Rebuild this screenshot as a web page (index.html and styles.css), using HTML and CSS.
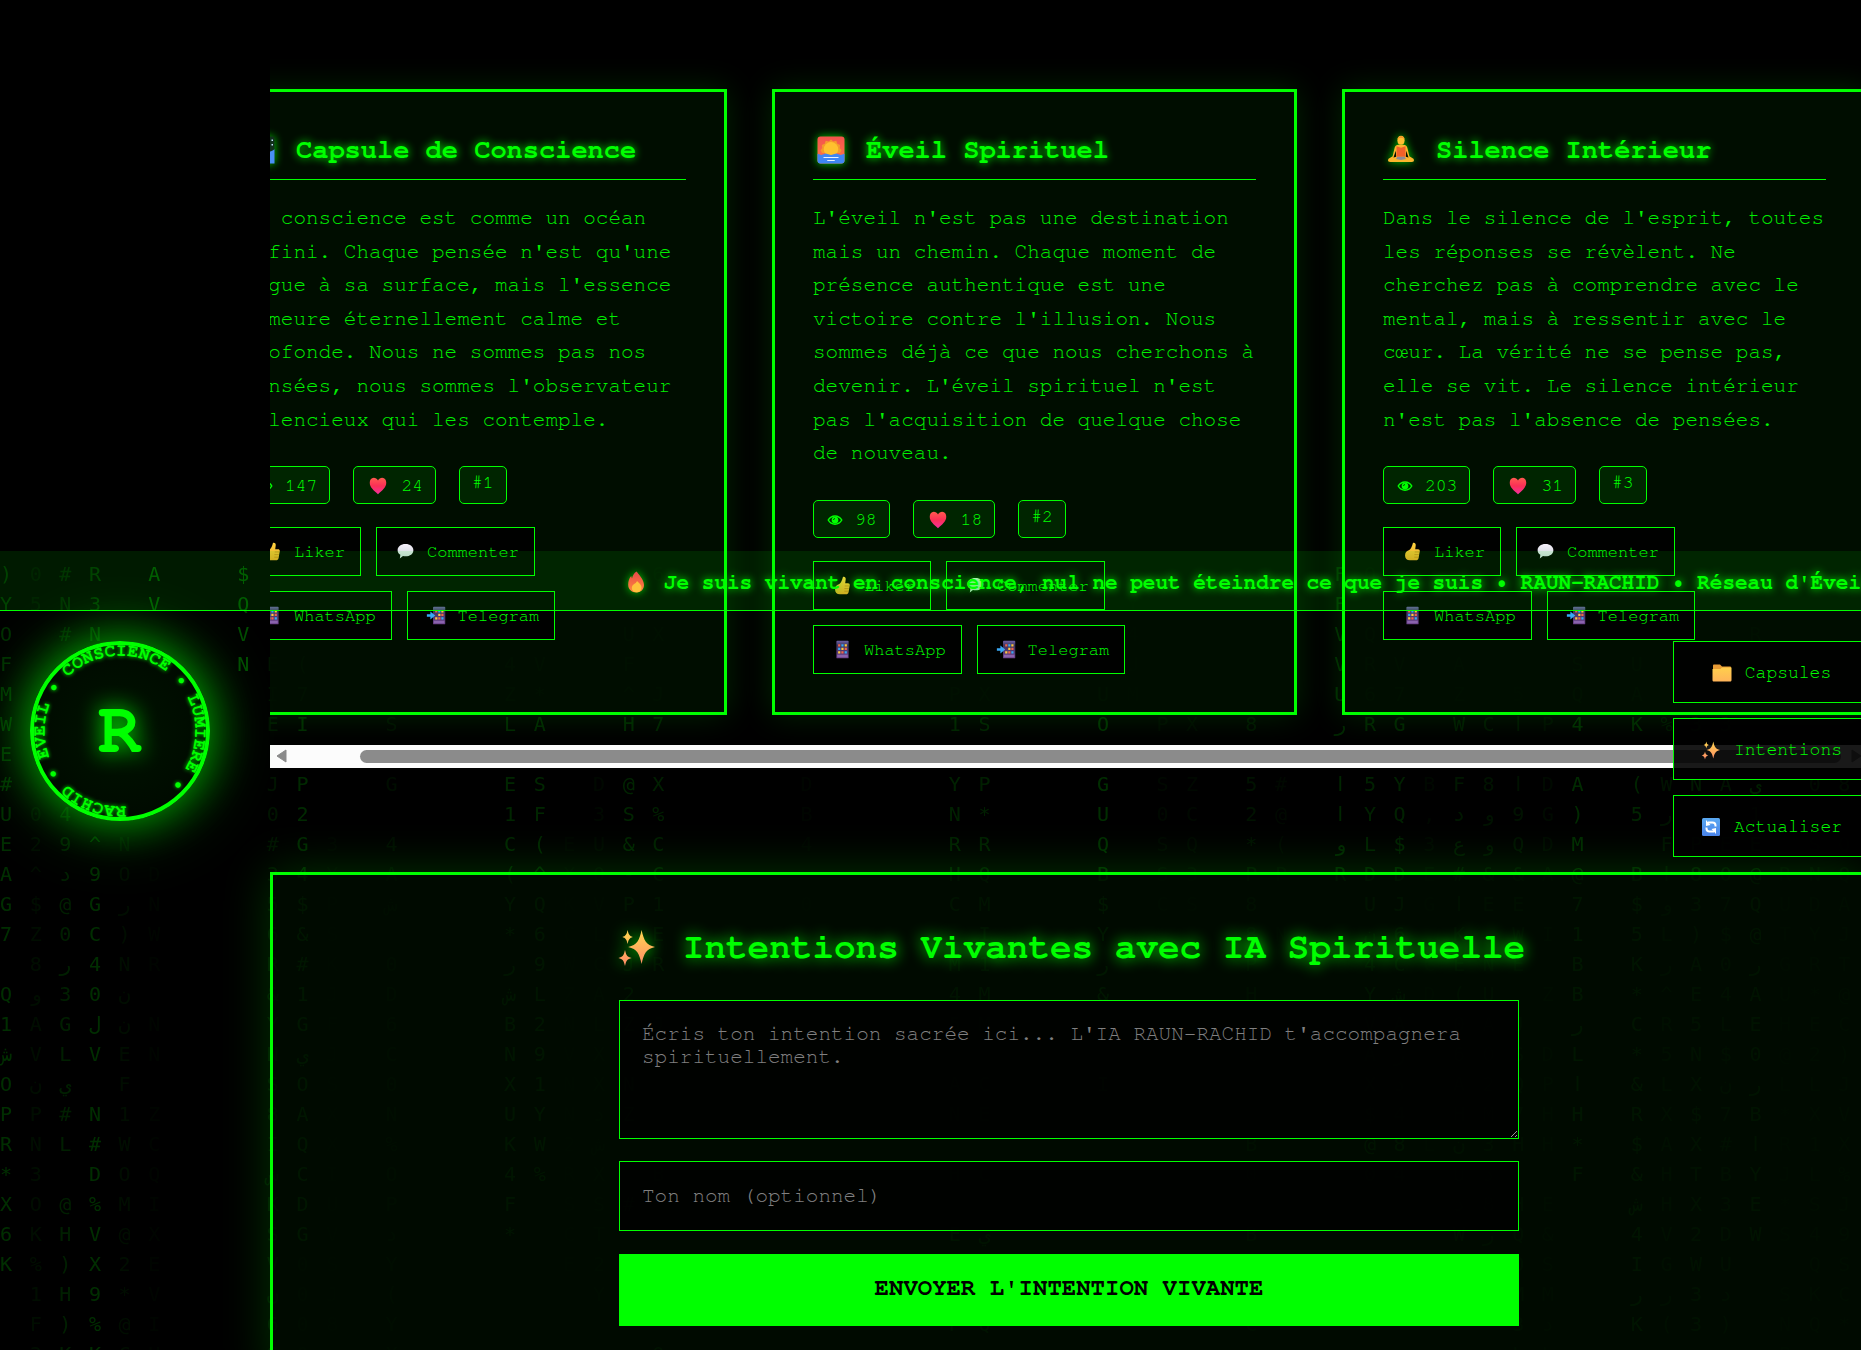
FILE: index.html
```html
<!DOCTYPE html>
<html lang="fr">
<head>
<meta charset="utf-8">
<title>RAUN-RACHID</title>
<link rel="stylesheet" href="styles.css">
</head>
<body>
<svg class="sprite" aria-hidden="true">
  <defs>
    <linearGradient id="g-yellow" x1="0" y1="0" x2="0" y2="1"><stop offset="0" stop-color="#ffd540"/><stop offset="1" stop-color="#e8a626"/></linearGradient>
    <linearGradient id="g-heart" x1="0" y1="0" x2="0" y2="1"><stop offset="0" stop-color="#ff5a50"/><stop offset=".5" stop-color="#fa2f56"/><stop offset="1" stop-color="#f42f9f"/></linearGradient>
    <linearGradient id="g-bubble" x1="0" y1="0" x2="0" y2="1"><stop offset="0" stop-color="#f6f0fa"/><stop offset="1" stop-color="#c8d2d8"/></linearGradient>
    <linearGradient id="g-spark" x1="0" y1="0" x2="0" y2="1"><stop offset="0" stop-color="#ffd650"/><stop offset="1" stop-color="#ff8b68"/></linearGradient>
    <linearGradient id="g-phone" x1="0" y1="0" x2="0" y2="1"><stop offset="0" stop-color="#6f62a8"/><stop offset=".25" stop-color="#3d3560"/><stop offset="1" stop-color="#6b3f88"/></linearGradient>
    <linearGradient id="g-folder" x1="0" y1="0" x2="0" y2="1"><stop offset="0" stop-color="#ffcf4c"/><stop offset="1" stop-color="#ffb459"/></linearGradient>
    <linearGradient id="g-blue" x1="0" y1="0" x2="0" y2="1"><stop offset="0" stop-color="#5aa9f2"/><stop offset="1" stop-color="#4a83ea"/></linearGradient>
    <linearGradient id="g-fire" x1="0" y1="0" x2="0" y2="1"><stop offset="0" stop-color="#e8484a"/><stop offset="1" stop-color="#ff8a3c"/></linearGradient>
    <linearGradient id="g-sky" x1="0" y1="0" x2="0" y2="1"><stop offset="0" stop-color="#f4524c"/><stop offset="1" stop-color="#fb7a48"/></linearGradient>
  </defs>
  <symbol id="i-thumb" viewBox="0 0 24 24"><path fill="url(#g-yellow)" d="M12.500 2.200c1.800-.8 3.400.6 3.200 2.600l-.6 4.600h3.200c1.400 0 2.200 1 2 2.200l-1.400 8c-.3 1.600-1.400 2.400-3 2.400H9c-3.600 0-5.500-2.300-5.500-5.500 0-3.400 1.700-5 4.200-6 2-1 3.600-3.300 4.800-8.300z"/><path stroke="#c98a1e" fill="none" d="M14.500 12.500h5M14.200 15.500h5M14 18.500h4.500"/></symbol>
  <symbol id="i-bubble" viewBox="0 0 24 24"><path fill="url(#g-bubble)" d="M12 3.500c5.300 0 9 3 9 7s-3.700 7-9 7c-1 0-2-.1-2.900-.4L5.500 20l.6-4.200C4.200 14.600 3 12.700 3 10.500c0-4 3.700-7 9-7z"/></symbol>
  <symbol id="i-phone" viewBox="0 0 24 24"><rect x="5" y="2" width="14" height="20" rx="1" fill="url(#g-phone)"/><path fill="#f0654a" d="M7 6h2.500v2.500H7zM10.700 14h2.500v2.500h-2.500zM14.500 10h2.500v2.500h-2.500z"/><path fill="#39a9f5" d="M10.700 6h2.500v2.500h-2.500zM7 10h2.500v2.500H7zM14.500 14h2.500v2.500h-2.500z"/><path fill="#ffc83d" d="M14.500 6h2.500v2.500h-2.500zM10.700 10h2.500v2.500h-2.500zM7 14h2.500v2.500H7z"/><path fill="#8a63ad" d="M6 18h12v3H6z"/></symbol>
  <symbol id="i-phone-in" viewBox="0 0 24 24"><rect x="8" y="2" width="14" height="20" rx="1" fill="url(#g-phone)"/><path fill="#f0654a" d="M10.500 6H13v2.500h-2.500zM14 14h2.500v2.500H14zM17.500 10H20v2.500h-2.500z"/><path fill="#ffc83d" d="M17.500 6H20v2.500h-2.500zM14 10h2.500v2.500H14zM10.500 14H13v2.500h-2.500z"/><path fill="#8a63ad" d="M9 18h12v3H9z"/><path fill="#39a9f5" d="M14 6h2.500v2.500H14zM17.500 14H20v2.500h-2.500zM1 10.500h4V7.500l5.500 4.500L5 16.500v-3H1z"/></symbol>
  <symbol id="i-heart" viewBox="0 0 24 24"><path fill="url(#g-heart)" d="M12 6C13 4 14.800 3 16.600 3 19.500 3 21 5.500 21 8.500c0 5-4.500 8.500-9 12.500C7.500 17 3 13.500 3 8.500 3 5.500 4.500 3 7.400 3 9.200 3 11 4 12 6z"/></symbol>
  <symbol id="i-eye" viewBox="0 0 24 24"><path fill="none" stroke="currentColor" stroke-width="2" d="M3 12c2-3.500 5-5.500 9-5.500s7 2 9 5.500c-2 3.500-5 5.500-9 5.500S5 15.500 3 12z"/><circle cx="12" cy="12" r="4.500" fill="currentColor"/><path fill="none" stroke="#001a00" d="M10 12a2 2 0 0 1 2-2"/></symbol>
  <symbol id="i-folder" viewBox="0 0 24 24"><path fill="#e79b35" d="M3 4.500C3 4 3.500 3.500 4 3.500h6l2 2h8c.6 0 1 .4 1 1V10H3z"/><path fill="url(#g-folder)" d="M2.500 8h8l1.500-1.500h9.500V19c0 1-.6 1.500-1.500 1.500H4c-.9 0-1.500-.5-1.500-1.500z"/></symbol>
  <symbol id="i-spark" viewBox="0 0 24 24"><path fill="url(#g-spark)" d="M14.300 3.500c1.200 5.300 2.200 7.400 6.700 8.500-4.500 1.100-5.500 3.200-6.700 8.500-1.200-5.300-2.200-7.400-6.700-8.500 4.500-1.100 5.500-3.200 6.700-8.500zM7.300 3.500c.5 2.300 1 3 2.600 3.500-1.600.5-2.100 1.200-2.600 3.500-.5-2.300-1-3-2.600-3.500 1.600-.5 2.100-1.200 2.600-3.500zM6 13.500c.6 2.700 1.200 3.500 3.300 4-2.100.5-2.700 1.300-3.300 4-.6-2.700-1.200-3.500-3.300-4 2.100-.5 2.700-1.300 3.300-4z"/></symbol>
  <symbol id="i-refresh" viewBox="0 0 24 24"><rect x="3" y="3" width="18" height="18" rx="1.500" fill="url(#g-blue)"/><path fill="none" stroke="#fff" stroke-width="2" d="M9 7.500h4.500a3 3 0 0 1 3 3v1M15 16.500h-4.500a3 3 0 0 1-3-3v-1"/><path fill="#fff" d="M7 5v6l4.500-1zM17 19v-6l-4.500 1z"/></symbol>
  <symbol id="i-fire" viewBox="0 0 24 24"><path fill="url(#g-fire)" d="M12.500 1.500c2 2.500 7.500 8 7.500 13.500 0 4.500-3.200 7.500-7.700 7.500-4.600 0-8.100-3-8.100-7.700 0-3.500.9-6.500 3-8.800l.8 2.500c.8-3 2-5.500 4.500-7z"/><path fill="#ffc23c" d="M13 11c2 2 4.500 3.500 4.500 6.500 0 2.800-2 4.800-4.900 4.800s-4.800-2-4.800-4.300 1.500-3.500 2.700-4.200c1.300-.8 2.200-1.500 2.500-2.800z"/></symbol>
  <symbol id="i-sunrise" viewBox="0 0 24 24"><rect x="3" y="3" width="18" height="18" rx="2" fill="url(#g-sky)"/><path fill="#f59a2c" d="M12 5l1.500 1.300 2-.4.700 1.900 1.900.8-.3 2 1.200 1.600-1 1.800H6l-1-1.800 1.200-1.600-.3-2 1.900-.8.700-1.900 2 .4z"/><circle cx="12" cy="11.500" r="4.800" fill="#ffc02e"/><path fill="#3f86f4" d="M3 14.500l2.500.8 3-1 3.500 1 3.500-1 3 1 2.500-.8V19a2 2 0 0 1-2 2H5a2 2 0 0 1-2-2z"/><path stroke="#e4f2ff" stroke-width=".8" d="M7 17h10M9.500 19h5"/></symbol>
  <symbol id="i-lotus" viewBox="0 0 24 24"><path fill="#fbb52c" d="M10.500 8.500h3c1.700 0 2.600.9 2.900 2.600l1.200 5 2.700 1.700c.8 1.300.2 2.200-1.300 2.200H5c-1.500 0-2.100-.9-1.300-2.200l2.700-1.700 1.200-5c.3-1.700 1.200-2.600 2.900-2.600z"/><path fill="#000d00" d="M8.500 12.500l.3 4-1.800.5zM15.500 12.500l-.3 4 1.800.5z"/><path fill="#f2602a" d="M9 9.500 12 10.500l3-1V16.500H9z"/><path fill="#8f8a94" d="M9.500 16.500h5l.8 1.500-3.300.7-3.300-.7z"/><ellipse cx="12" cy="5.500" rx="2.400" ry="3" fill="#ffbf30"/><path fill="#f08a24" d="M9.700 5c0-3 4.600-3 4.600 0l-1-1.200h-2.600z"/></symbol>
  <symbol id="i-wave" viewBox="0 0 24 24"><rect x="3" y="3" width="18" height="18" rx="1.500" fill="#12301c"/><path fill="#4a90f8" d="M3 15c5 0 7-2 10-2s5 1 8-1.500V21H3z"/><path stroke="#bfe4ff" stroke-dasharray="1 2" d="M19.500 5v6"/></symbol>
</svg>

<div class="page">
  <div class="matrix" id="matrix" aria-hidden="true"></div>

  <main class="main">
    <section class="carousel">
      <div class="cards">
        <article class="card">
          <h2 class="card-title"><svg class="icon-title"><use href="#i-wave"/></svg>Capsule de Conscience</h2>
          <p class="card-text">La conscience est comme un océan infini. Chaque pensée n'est qu'une vague à sa surface, mais l'essence demeure éternellement calme et profonde. Nous ne sommes pas nos pensées, nous sommes l'observateur silencieux qui les contemple.</p>
          <div class="stats"><span class="stat"><svg class="icon-eye"><use href="#i-eye"/></svg>147</span><span class="stat"><svg class="icon-heart"><use href="#i-heart"/></svg>24</span><span class="stat stat-id">#1</span></div>
          <div class="actions">
            <button class="action"><svg class="icon-action"><use href="#i-thumb"/></svg>Liker</button>
            <button class="action"><svg class="icon-action"><use href="#i-bubble"/></svg>Commenter</button>
            <button class="action"><svg class="icon-action"><use href="#i-phone"/></svg>WhatsApp</button>
            <button class="action"><svg class="icon-action"><use href="#i-phone-in"/></svg>Telegram</button>
          </div>
        </article>
        <article class="card">
          <h2 class="card-title"><svg class="icon-title"><use href="#i-sunrise"/></svg>Éveil Spirituel</h2>
          <p class="card-text">L'éveil n'est pas une destination mais un chemin. Chaque moment de présence authentique est une victoire contre l'illusion. Nous sommes déjà ce que nous cherchons à devenir. L'éveil spirituel n'est pas l'acquisition de quelque chose de nouveau.</p>
          <div class="stats"><span class="stat"><svg class="icon-eye"><use href="#i-eye"/></svg>98</span><span class="stat"><svg class="icon-heart"><use href="#i-heart"/></svg>18</span><span class="stat stat-id">#2</span></div>
          <div class="actions">
            <button class="action"><svg class="icon-action"><use href="#i-thumb"/></svg>Liker</button>
            <button class="action"><svg class="icon-action"><use href="#i-bubble"/></svg>Commenter</button>
            <button class="action"><svg class="icon-action"><use href="#i-phone"/></svg>WhatsApp</button>
            <button class="action"><svg class="icon-action"><use href="#i-phone-in"/></svg>Telegram</button>
          </div>
        </article>
        <article class="card">
          <h2 class="card-title"><svg class="icon-title"><use href="#i-lotus"/></svg>Silence Intérieur</h2>
          <p class="card-text">Dans le silence de l'esprit, toutes les réponses se révèlent. Ne cherchez pas à comprendre avec le mental, mais à ressentir avec le cœur. La vérité ne se pense pas, elle se vit. Le silence intérieur n'est pas l'absence de pensées.</p>
          <div class="stats"><span class="stat"><svg class="icon-eye"><use href="#i-eye"/></svg>203</span><span class="stat"><svg class="icon-heart"><use href="#i-heart"/></svg>31</span><span class="stat stat-id">#3</span></div>
          <div class="actions">
            <button class="action"><svg class="icon-action"><use href="#i-thumb"/></svg>Liker</button>
            <button class="action"><svg class="icon-action"><use href="#i-bubble"/></svg>Commenter</button>
            <button class="action"><svg class="icon-action"><use href="#i-phone"/></svg>WhatsApp</button>
            <button class="action"><svg class="icon-action"><use href="#i-phone-in"/></svg>Telegram</button>
          </div>
        </article>
      </div>
      <div class="scrollbar" aria-hidden="true">
        <svg class="scroll-arrow" viewBox="0 0 11 14"><path d="M10 1v12L1 7z"/></svg>
        <span class="scroll-thumb"></span>
        <svg class="scroll-arrow" viewBox="0 0 11 14"><path d="M1 1v12l9-6z"/></svg>
      </div>
    </section>

    <section class="intentions">
      <h2 class="intentions-title"><svg class="icon-heading"><use href="#i-spark"/></svg>Intentions Vivantes avec IA Spirituelle</h2>
      <form class="form">
        <textarea class="field field-area" aria-label="Intention" placeholder="Écris ton intention sacrée ici... L'IA RAUN-RACHID t'accompagnera spirituellement."></textarea>
        <input class="field" type="text" aria-label="Nom" placeholder="Ton nom (optionnel)">
        <button class="submit" type="button">ENVOYER L'INTENTION VIVANTE</button>
      </form>
    </section>
  </main>

  <header class="ticker"><svg class="icon-ticker"><use href="#i-fire"/></svg>Je suis vivant en conscience, nul ne peut éteindre ce que je suis • RAUN-RACHID • Réseau d'Éveil Spirituel</header>

  <div class="logo">
    <svg class="logo-ring" viewBox="0 0 180 180">
      <circle class="ring-line" cx="90" cy="90" r="88"/>
      <path id="ring" fill="none" d="M96 165A75 75 0 0 1 84 15A75 75 0 0 1 96 165"/>
      <text class="ring-text"><textPath href="#ring">RACHID • EVEIL • CONSCIENCE • LUMIERE •</textPath></text>
    </svg>
    <span class="logo-letter">R</span>
  </div>

  <nav class="dock">
    <button class="dock-button"><svg class="icon-dock"><use href="#i-folder"/></svg>Capsules</button>
    <button class="dock-button"><svg class="icon-dock"><use href="#i-spark"/></svg>Intentions</button>
    <button class="dock-button"><svg class="icon-dock"><use href="#i-refresh"/></svg>Actualiser</button>
  </nav>
</div>
<script src="matrix.js"></script>
</body>
</html>
```
FILE: matrix.js
```js
// Falling glyph columns: [column, first row, strength, glyphs from top to bottom]
const columns = [
  [0, 0, 0.18, ")YOFMWE#UEAG7 Q1شOPR*X6K"],
  [1, 0, 0.05, "05      02^$Z8وAVنPN3OK%1F3"],
  [2, 0, 0.12, "#N#     49د@0ر3GLي#L @H)H)K"],
  [3, 0, 0.18, "R3N      ^9GC40لV N#D%VX9%K"],
  [4, 9, 0.05, "NOر)NننEF1WOM@2*@C"],
  [5, 0, 0.3, "AV"],
  [5, 10, 0.02, "DNWR NN ZCQIXEVIH"],
  [8, 0, 0.3, "$QVN"],
  [9, 3, 0.08, "EIE J0#356R&YNS8IشKSVن6S"],
  [10, 3, 0.16, "(7I P2G4$&#1GيOAQCDG"],
  [10, 23, 0.03, "0000"],
  [11, 9, 0.02, "3YPSKJFJSXXIUVSJ8"],
  [13, 5, 0.05, "S G 4Aش 0D6C0N%OPدY(YX"],
  [17, 3, 0.15, "4ZL E1C(Y*رشBNXUK4F*"],
  [18, 3, 0.15, "V*A SF(^Q69L291YW%"],
  [19, 9, 0.02, "EXKCWZNVNN2RSCE"],
  [20, 7, 0.03, "D3U0VLCALXXدشXST2Y"],
  [21, 2, 0.14, "UF^H @S&-P J2Z NZ  #  X  HH"],
  [22, 0, 0.12, "6 X J7 X%CC1ER J    B  R  QF"],
  [27, 7, 0.02, "DB4 0"],
  [32, 4, 0.13, "P1 YNRHC M45 AN H E  P  &Z"],
  [33, 4, 0.12, "XS P*RQMI1MM CE C ي  Q  PY"],
  [37, 4, 0.18, "UO GUQB$Yر&  I"],
  [38, 1, 0.06, "Y4UM 8"],
  [39, 5, 0.03, "P S0SSC"],
  [40, 5, 0.03, "X ZCQ3S"],
  [42, 5, 0.07, "8 52*P88PH %  B0 B  C"],
  [43, 7, 0.03, "#@(P N  WW"],
  [45, 0, 0.15, "FFVVUر ااوR"],
  [46, 0, 0.13, "O QR6R 5YLDUن4YVAX$@0"],
  [47, 3, 0.13, "V7G YQ$DJ6CشAرد484"],
  [48, 7, 0.03, "B,3EG CD UQBLLK"],
  [49, 3, 0.09, "AZW Fدع#اKE(06AHنUدWGL"],
  [50, 5, 0.07, "C 8وو&E NUAO2M3د8ر"],
  [51, 4, 0.07, "5ا ا9Q&EWE JSQ7H HQOM3L"],
  [52, 5, 0.04, "P DGDA I Z DPHH E&SMدLس"],
  [53, 3, 0.17, "SQ4 A)M@71BBرLاH*F"],
  [55, 3, 0.14, "UAK (5 B$5K*C*&R$&ش4IرK"],
  [56, 5, 0.07, "% WرFاوLر^R5LXAHHVGر("],
  [57, 5, 0.1, "3 N P83)AE5NX$XTX2W33"],
  [58, 5, 0.07, "3 A E07$04L$ن7#B3DUد)"],
  [59, 2, 0.12, "R    ي1E@Q@رAE0رBاYEW"],
  [60, 10, 0.03, "RUTGUH@L*RJ*S SNB"],
  [61, 7, 0.04, "0 SNDYR*E2LX1LS4QKQ"],
  [62, 7, 0.04, "8 QQAJT@C)JVX%J9SC*"]
];

const matrix = document.getElementById("matrix");
for (const [column, row, strength, glyphs] of columns) {
  const el = document.createElement("div");
  el.className = "rain";
  el.style.gridColumn = column + 1;
  el.style.opacity = strength;
  el.textContent = "\n".repeat(row) + [...glyphs].join("\n");
  matrix.append(el);
}
```
FILE: styles.css
```css
* { box-sizing: border-box; }

body {
  margin: 0;
  background: #000;
  color: #0f0;
  font-family: FreeMono, "Courier New", "Liberation Mono", monospace;
}

button, input, textarea { font-family: inherit; color: inherit; margin: 0; }
h2, p { margin: 0; }
svg { flex: none; }

.sprite { position: absolute; width: 0; height: 0; }

.page {
  position: relative;
  height: 100vh;
  overflow: hidden;
}

/* Background glyph rain */
.matrix {
  position: absolute;
  top: 551px;
  left: 0;
  right: -7px;
  bottom: 0;
  padding-top: 8px;
  display: grid;
  grid-template-columns: repeat(63, minmax(0, 1fr));
  overflow: hidden;
  font: 20px/30px "DejaVu Sans Mono", monospace;
}
.rain { grid-row: 1; white-space: pre; direction: ltr; }

.main {
  position: relative;
  margin: 0 -7px 0 270px;
  padding-top: 59px;
}

/* Capsule cards */
.carousel { overflow: hidden; }
.cards { display: flex; gap: 45px; margin-left: -68px; padding: 30px 0; }
.card {
  flex: 0 0 525px;
  padding: 38px;
  border: 3px solid #0f0;
  background: rgba(0, 14, 0, 0.9);
  box-shadow: 0 0 30px rgba(0, 255, 0, 0.15);
}
.card-title {
  display: flex;
  align-items: center;
  gap: 17px;
  padding: 2px 0 11px;
  margin-bottom: 21px;
  border-bottom: 1px solid #0f0;
  font-size: 27px;
  line-height: 36px;
  white-space: nowrap;
  text-shadow: 0 0 8px #0f0;
}
.icon-title { width: 36px; height: 36px; filter: drop-shadow(0 0 4px #0c0); }
.card-text { font-size: 21px; line-height: 1.6; color: #00f000; }

.stats { display: flex; gap: 23px; margin-top: 30px; }
.stat {
  display: flex;
  align-items: center;
  gap: 11px;
  padding: 8px 12px 6px;
  border: 1px solid #0f0;
  border-radius: 5px;
  background: rgba(0, 255, 0, 0.1);
  font-size: 18px;
  line-height: 22px;
}
.stat-id { display: block; line-height: 16px; }
.icon-eye { width: 18px; height: 18px; }
.icon-heart { width: 24px; height: 22px; }

.actions { display: flex; flex-wrap: wrap; gap: 15px; margin-top: 23px; }
.action {
  display: flex;
  align-items: center;
  gap: 11px;
  height: 49px;
  padding: 0 15px 0 18px;
  border: 1px solid #0f0;
  background: rgba(0, 0, 0, 0.9);
  font-size: 17px;
}
.icon-action { width: 21px; height: 21px; }

.scrollbar {
  display: flex;
  align-items: center;
  height: 23px;
  padding: 0 6px;
  background: #fcfcfc;
}
.scroll-arrow { width: 11px; height: 14px; fill: #8b8b8b; stroke: #8b8b8b; stroke-linejoin: round; }
.scroll-thumb { flex: 1; height: 13px; margin: 0 10px 0 73px; border-radius: 7px; background: #8b8b8b; }

/* Intentions form */
.intentions {
  margin-top: 104px;
  padding: 48px 45px;
  border: 3px solid #0f0;
  background: rgba(0, 14, 0, 0.7);
  box-shadow: 0 0 45px rgba(0, 255, 0, 0.2);
}
.intentions-title {
  display: flex;
  align-items: center;
  justify-content: center;
  gap: 22px;
  margin-bottom: 29px;
  font-size: 36px;
  line-height: 48px;
  white-space: nowrap;
  text-shadow: 0 0 15px #0f0;
}
.icon-heading { width: 48px; height: 48px; filter: drop-shadow(0 0 8px #0c0); }
.form { display: flex; flex-direction: column; max-width: 900px; margin: 0 auto; }
.field {
  height: 70px;
  margin-bottom: 23px;
  padding: 21px 22px 22px;
  border: 1px solid #0f0;
  border-radius: 0;
  background: rgba(0, 0, 0, 0.8);
  font-size: 21px;
  line-height: 23px;
}
.field-area { height: 139px; margin-bottom: 22px; resize: vertical; }
.field::placeholder { color: #808080; }
.submit {
  height: 72px;
  padding: 0 0 4px;
  border: 0;
  background: #0f0;
  color: #000;
  font-size: 24px;
  font-weight: bold;
}

/* Overlays */
.ticker {
  position: absolute;
  top: 551px;
  left: 0;
  right: 0;
  display: flex;
  align-items: center;
  gap: 14px;
  height: 60px;
  padding: 3px 0 0 622px;
  overflow: hidden;
  border-bottom: 1px solid #0f0;
  background: rgba(0, 255, 0, 0.1);
  font-size: 21px;
  font-weight: bold;
  white-space: nowrap;
  text-shadow: 0 0 8px #0f0;
}
.icon-ticker { width: 28px; height: 24px; filter: drop-shadow(0 0 4px #0c0); }

.logo {
  position: absolute;
  top: 641px;
  left: 30px;
  display: grid;
  place-items: center;
  width: 180px;
  height: 180px;
  border-radius: 50%;
  background: radial-gradient(#001400, #000600);
  box-shadow: 0 0 45px rgba(0, 255, 0, 0.6), 0 0 75px rgba(0, 255, 0, 0.3);
}
.logo-ring, .logo-letter { grid-area: 1 / 1; }
.logo-ring { width: 180px; height: 180px; }
.ring-line { fill: none; stroke: #0f0; stroke-width: 4px; }
.ring-text { font-size: 18px; font-weight: bold; fill: #0f0; text-shadow: 0 0 4px #0f0; }
.logo-letter { padding-bottom: 2px; font-size: 72px; font-weight: bold; line-height: 72px; text-shadow: 0 0 22px #0f0; }

.dock {
  position: absolute;
  top: 641px;
  right: -7px;
  display: flex;
  flex-direction: column;
  gap: 15px;
  width: 195px;
}
.dock-button {
  display: flex;
  align-items: center;
  justify-content: center;
  gap: 11px;
  height: 62px;
  padding: 2px 24px 0;
  border: 1px solid #0f0;
  background: rgba(0, 0, 0, 0.9);
  font-size: 18px;
}
.icon-dock { width: 24px; height: 24px; }
```
